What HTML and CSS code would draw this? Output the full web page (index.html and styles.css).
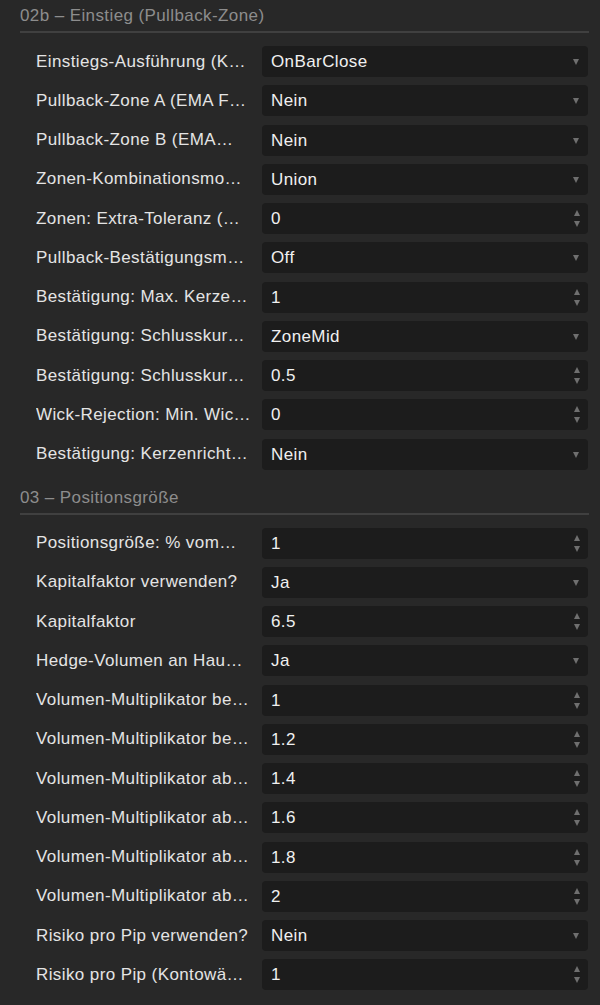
FILE: index.html
```html
<!DOCTYPE html>
<html lang="de">
<head>
  <meta charset="UTF-8" />
  <meta name="viewport" content="width=device-width, initial-scale=1.0" />
  <title>Parameter</title>
  <link rel="stylesheet" href="styles.css">
</head>
<body>
  <div class="panel">

    <div class="group">
      <div class="group-title">02b – Einstieg (Pullback-Zone)</div>
      <div class="rows">
        <div class="row"><span class="label">Einstiegs-Ausführung (K…</span><div class="field select">OnBarClose</div></div>
        <div class="row"><span class="label">Pullback-Zone A (EMA F…</span><div class="field select">Nein</div></div>
        <div class="row"><span class="label">Pullback-Zone B (EMA…</span><div class="field select">Nein</div></div>
        <div class="row"><span class="label">Zonen-Kombinationsmo…</span><div class="field select">Union</div></div>
        <div class="row"><span class="label">Zonen: Extra-Toleranz (…</span><div class="field number">0</div></div>
        <div class="row"><span class="label">Pullback-Bestätigungsm…</span><div class="field select">Off</div></div>
        <div class="row"><span class="label">Bestätigung: Max. Kerze…</span><div class="field number">1</div></div>
        <div class="row"><span class="label">Bestätigung: Schlusskur…</span><div class="field select">ZoneMid</div></div>
        <div class="row"><span class="label">Bestätigung: Schlusskur…</span><div class="field number">0.5</div></div>
        <div class="row"><span class="label">Wick-Rejection: Min. Wic…</span><div class="field number">0</div></div>
        <div class="row"><span class="label">Bestätigung: Kerzenricht…</span><div class="field select">Nein</div></div>
      </div>
    </div>

    <div class="group">
      <div class="group-title">03 – Positionsgröße</div>
      <div class="rows">
        <div class="row"><span class="label">Positionsgröße: % vom…</span><div class="field number">1</div></div>
        <div class="row"><span class="label">Kapitalfaktor verwenden?</span><div class="field select">Ja</div></div>
        <div class="row"><span class="label">Kapitalfaktor</span><div class="field number">6.5</div></div>
        <div class="row"><span class="label">Hedge-Volumen an Hau…</span><div class="field select">Ja</div></div>
        <div class="row"><span class="label">Volumen-Multiplikator be…</span><div class="field number">1</div></div>
        <div class="row"><span class="label">Volumen-Multiplikator be…</span><div class="field number">1.2</div></div>
        <div class="row"><span class="label">Volumen-Multiplikator ab…</span><div class="field number">1.4</div></div>
        <div class="row"><span class="label">Volumen-Multiplikator ab…</span><div class="field number">1.6</div></div>
        <div class="row"><span class="label">Volumen-Multiplikator ab…</span><div class="field number">1.8</div></div>
        <div class="row"><span class="label">Volumen-Multiplikator ab…</span><div class="field number">2</div></div>
        <div class="row"><span class="label">Risiko pro Pip verwenden?</span><div class="field select">Nein</div></div>
        <div class="row"><span class="label">Risiko pro Pip (Kontowä…</span><div class="field number">1</div></div>
      </div>
    </div>

  </div>
</body>
</html>
```

FILE: styles.css
```css
* { box-sizing: border-box; margin: 0; padding: 0; }
body {
  background: #282828;
  color: #e4e4e4;
  font-family: 'Liberation Sans', Arial, sans-serif;
  font-size: 17px;
  letter-spacing: 0.4px;
}
.panel {
  padding: 0 11px 0 20px;
}
.group {
  margin-bottom: 12px;
}
.group-title {
  height: 33px;
  padding-top: 6px;
  color: #8d8d8d;
  border-bottom: 2px solid #404040;
  line-height: 20px;
}
.rows {
  display: flex;
  flex-direction: column;
  gap: 8.25px;
  padding: 13px 1px 0 16px;
}
.row {
  display: grid;
  grid-template-columns: 226px 1fr;
  align-items: center;
  height: 31px;
}
.label {
  white-space: nowrap;
  overflow: hidden;
  text-overflow: ellipsis;
  padding-right: 6px;
}
.field {
  position: relative;
  height: 31px;
  line-height: 31px;
  padding: 0 24px 0 9px;
  background: #1c1c1c;
  border-radius: 4px;
  color: #f0f0f0;
}
/* dropdown caret */
.select::after {
  content: '';
  position: absolute;
  right: 9px;
  top: 13px;
  border-left: 3px solid transparent;
  border-right: 3px solid transparent;
  border-top: 6px solid #6f6f6f;
}
/* number spinner arrows */
.number::before,
.number::after {
  content: '';
  position: absolute;
  right: 8px;
  border-left: 3px solid transparent;
  border-right: 3px solid transparent;
}
.number::before {
  top: 7px;
  border-bottom: 6px solid #6f6f6f;
}
.number::after {
  top: 18px;
  border-top: 6px solid #6f6f6f;
}
```
